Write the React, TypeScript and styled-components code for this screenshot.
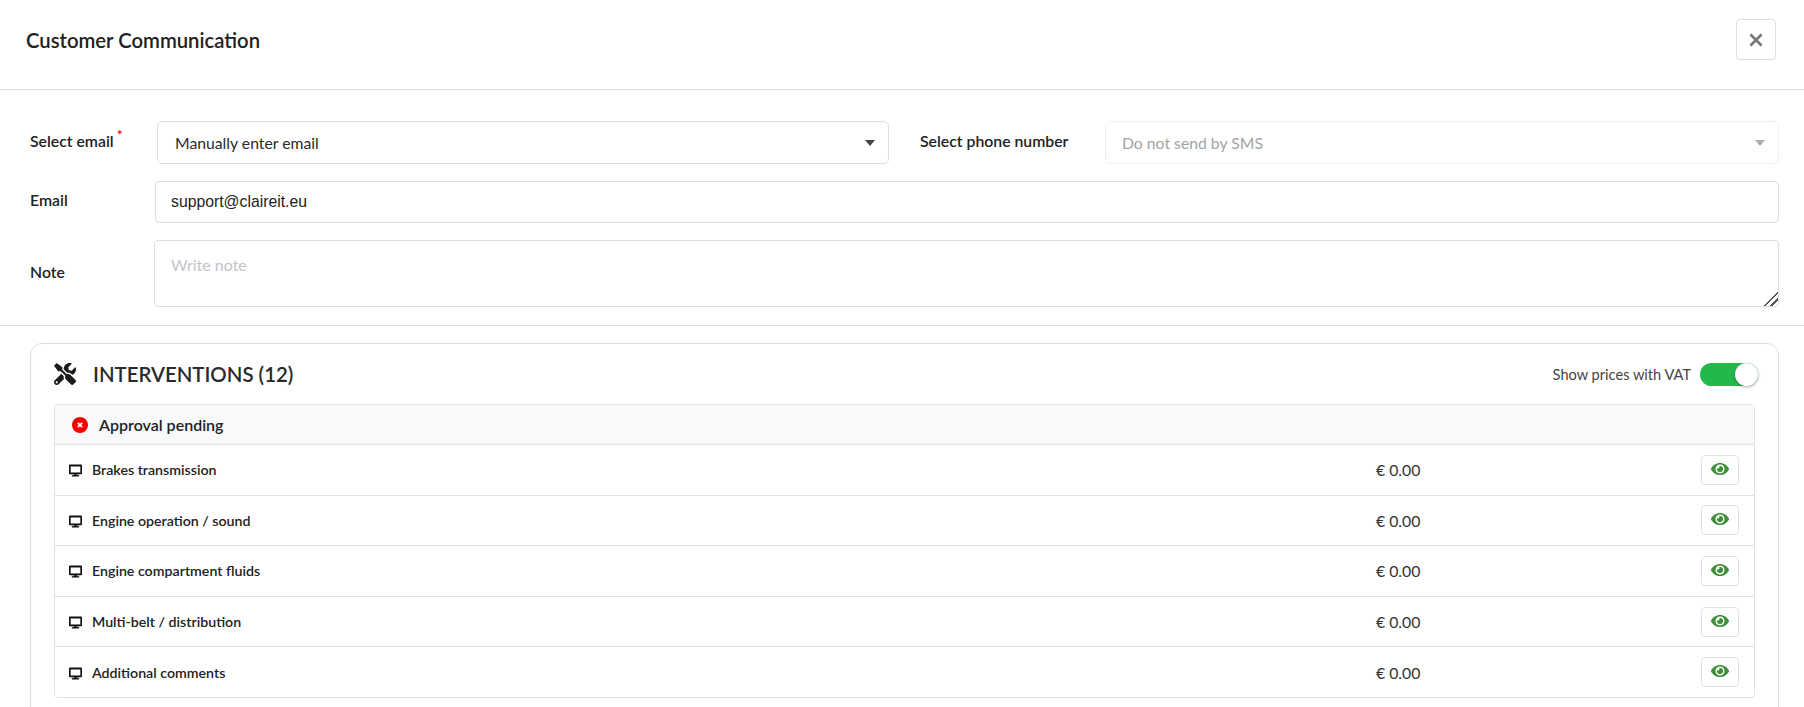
import React from "react";
import styled, { createGlobalStyle } from "styled-components";
import { FaDesktop, FaEye, FaTools } from "react-icons/fa";

const interventions = [
  "Brakes transmission",
  "Engine operation / sound",
  "Engine compartment fluids",
  "Multi-belt / distribution",
  "Additional comments",
];

const App: React.FC = () => {
  return (
    <>
      <GlobalStyle />
      <Modal>
        <Header>
          <Title>Customer Communication</Title>
          <CloseButton aria-label="Close">
            <svg width="14" height="14" viewBox="0 0 14 14">
              <path
                d="M1.5 1.5 L12.5 12.5 M12.5 1.5 L1.5 12.5"
                stroke="#767676"
                strokeWidth="2.6"
                fill="none"
              />
            </svg>
          </CloseButton>
        </Header>

        <Form>
          <SelectRow>
            <Label $width={127}>
              Select email<Required>*</Required>
            </Label>
            <EmailSelect>
              <span>Manually enter email</span>
              <Caret />
            </EmailSelect>
            <Label $width={185}>Select phone number</Label>
            <PhoneSelect>
              <span>Do not send by SMS</span>
              <Caret $disabled />
            </PhoneSelect>
          </SelectRow>
          <EmailRow>
            <Label $width={125}>Email</Label>
            <TextInput defaultValue="support@claireit.eu" />
          </EmailRow>
          <NoteRow>
            <Label $width={124}>Note</Label>
            <NoteInput placeholder="Write note" />
          </NoteRow>
        </Form>

        <Body>
          <Card>
            <CardHeader>
              <CardTitle>
                <FaTools size={22} color="#1c1c1c" />
                <span>INTERVENTIONS (12)</span>
              </CardTitle>
              <VatToggle>
                <span>Show prices with VAT</span>
                <Track>
                  <Knob />
                </Track>
              </VatToggle>
            </CardHeader>
            <Table>
              <GroupHeader>
                <svg width="16" height="16" viewBox="0 0 16 16">
                  <circle cx="8" cy="8" r="8" fill="#f50000" />
                  <path
                    d="M5.8 5.8 L10.2 10.2 M10.2 5.8 L5.8 10.2"
                    stroke="#fff"
                    strokeWidth="1.7"
                  />
                </svg>
                <span>Approval pending</span>
              </GroupHeader>
              {interventions.map((name) => (
                <Row key={name}>
                  <RowName>
                    <DesktopIcon size={13} color="#111" />
                    <span>{name}</span>
                  </RowName>
                  <Price>€ 0.00</Price>
                  <EyeButton aria-label="View">
                    <FaEye size={18} color="#3f8f3a" />
                  </EyeButton>
                </Row>
              ))}
            </Table>
          </Card>
        </Body>
      </Modal>
    </>
  );
};

const GlobalStyle = createGlobalStyle`
  html, body {
    margin: 0;
    padding: 0;
    height: 707px;
    overflow: hidden;
    background: #fff;
  }
  * {
    box-sizing: border-box;
  }
`;

const Modal = styled.div`
  width: 1804px;
  height: 707px;
  overflow: hidden;
  font-family: Lato, sans-serif;
  color: #1f1f1f;
`;

const Header = styled.header`
  height: 90px;
  display: flex;
  align-items: center;
  justify-content: space-between;
  padding: 0 28px 10px 26px;
  border-bottom: 1px solid #dcdcdc;
`;

const Title = styled.h1`
  margin: 0;
  font-size: 20.3px;
  font-weight: 600;
  color: #222;
`;

const CloseButton = styled.button`
  width: 40px;
  height: 41px;
  display: flex;
  align-items: center;
  justify-content: center;
  padding: 0;
  background: #fff;
  border: 1px solid #e0e0e0;
  border-radius: 4px;
`;

const Form = styled.div`
  padding: 31px 25px 18px 30px;
  border-bottom: 1px solid #dcdcdc;
`;

const SelectRow = styled.div`
  display: flex;
  align-items: center;
  height: 43px;
`;

const EmailRow = styled.div`
  display: flex;
  align-items: center;
  height: 42px;
  margin-top: 17px;
`;

const NoteRow = styled.div`
  display: flex;
  align-items: center;
  height: 67px;
  margin-top: 17px;
`;

const Label = styled.label<{ $width: number }>`
  flex: 0 0 ${(p) => p.$width}px;
  font-size: 15.8px;
  font-weight: 600;
  color: #222;
  padding-bottom: 5px;
`;

const Required = styled.sup`
  color: #f00;
  font-size: 14px;
  line-height: 0;
  margin-left: 3px;
`;

const EmailSelect = styled.div`
  flex: 0 0 732px;
  height: 100%;
  display: flex;
  align-items: center;
  justify-content: space-between;
  padding: 0 13px 0 17px;
  margin-right: 31px;
  font-size: 15.75px;
  color: #2b2b2b;
  border: 1px solid #dedede;
  border-radius: 5px;
  background: #fff;
`;

const PhoneSelect = styled(EmailSelect)`
  flex: 1;
  margin-right: 0;
  color: #a3a3a3;
  border-color: #efefef;
  padding: 0 13px 0 16px;
`;

const Caret = styled.i<{ $disabled?: boolean }>`
  width: 0;
  height: 0;
  border-left: 5px solid transparent;
  border-right: 5px solid transparent;
  border-top: 6px solid ${(p) => (p.$disabled ? "#aaa" : "#444")};
`;

const TextInput = styled.input`
  flex: 1;
  height: 100%;
  padding: 0 15px;
  font-family: "Liberation Sans", Arial, sans-serif;
  font-size: 15.75px;
  color: #222;
  border: 1px solid #dedede;
  border-radius: 4px;
  outline: none;
`;

const NoteInput = styled.textarea`
  flex: 1;
  height: 100%;
  padding: 14px 16px;
  font-family: Lato, sans-serif;
  font-size: 16px;
  border: 1px solid #dedede;
  border-radius: 4px;
  outline: none;
  &::placeholder {
    color: #c4c4c4;
  }
  &::-webkit-resizer {
    background: linear-gradient(
      135deg,
      transparent 50%,
      #555 50%,
      #555 58%,
      transparent 58%,
      transparent 72%,
      #555 72%,
      #555 80%,
      transparent 80%
    );
  }
`;

const Body = styled.div`
  padding: 17px 25px 0 30px;
`;

const Card = styled.section`
  border: 1px solid #dedede;
  border-radius: 12px;
  padding: 0 23px 20px 23px;
`;

const CardHeader = styled.div`
  height: 60px;
  display: flex;
  align-items: center;
  justify-content: space-between;
`;

const CardTitle = styled.div`
  display: flex;
  align-items: center;
  gap: 17px;
  font-size: 20.4px;
  font-weight: 600;
  color: #2a2a2a;
`;

const VatToggle = styled.div`
  display: flex;
  align-items: center;
  gap: 9px;
  font-size: 14.6px;
  color: #444;
  margin-right: -3px;
`;

const Track = styled.div`
  position: relative;
  width: 58px;
  height: 23px;
  border-radius: 12px;
  background: #22b84c;
`;

const Knob = styled.div`
  position: absolute;
  top: 0;
  right: 0;
  width: 23px;
  height: 23px;
  border-radius: 50%;
  background: #fff;
  box-shadow: 0 1px 3px rgba(0, 0, 0, 0.35);
`;

const Table = styled.div`
  border: 1px solid #e2e2e2;
  border-radius: 4px;
`;

const GroupHeader = styled.div`
  height: 39px;
  display: flex;
  align-items: center;
  gap: 11px;
  padding-left: 17px;
  background: #f8f9fb;
  font-size: 16px;
  font-weight: 600;
  color: #222;
`;

const Row = styled.div`
  height: 50.6px;
  display: grid;
  grid-template-columns: 1307px 1fr 38px;
  align-items: center;
  padding: 0 15px 0 14px;
  border-top: 1px solid #e2e2e2;
`;

const RowName = styled.div`
  display: flex;
  align-items: center;
  gap: 10px;
  font-size: 14.2px;
  font-weight: 600;
  color: #222;
`;

const DesktopIcon = styled(FaDesktop)`
  stroke: #111;
  stroke-width: 20px;
  margin-top: 2px;
`;

const Price = styled.div`
  font-size: 15.8px;
  color: #333;
`;

const EyeButton = styled.button`
  width: 38px;
  height: 30px;
  display: flex;
  align-items: center;
  justify-content: center;
  padding: 0 0 2px;
  background: #fff;
  border: 1px solid #e2e2e2;
  border-radius: 4px;
`;

export default App;
